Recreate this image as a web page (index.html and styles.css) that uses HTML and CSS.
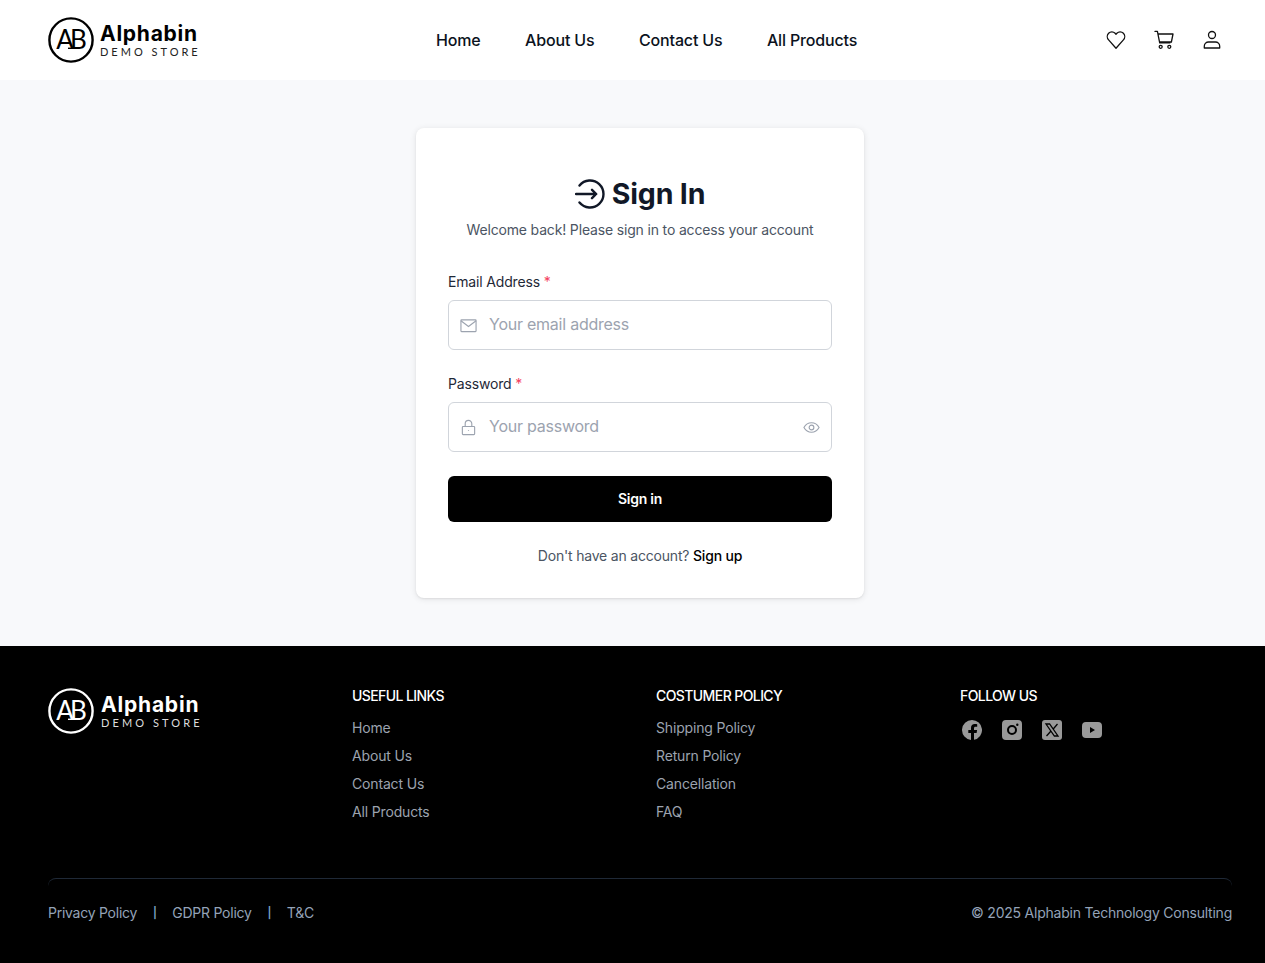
FILE: index.html
```html
<!DOCTYPE html>
<html lang="en">
<head>
<meta charset="utf-8">
<title>Sign In</title>
<link rel="stylesheet" href="styles.css">
</head>
<body>
<div class="page">
<header class="site-header">
  <a class="logo">
    <svg class="logo-mark" viewBox="0 0 46 46"><circle cx="23" cy="23" r="21.6" fill="none" stroke="currentColor" stroke-width="2.400"/><text x="21.500" y="32" text-anchor="middle" class="logo-ab">AB</text><path d="M20 31.300h11" class="logo-base"/></svg>
    <span class="logo-text"><span class="logo-name">Alphabin</span><span class="logo-sub">DEMO STORE</span></span>
  </a>
  <nav class="main-nav">
    <a>Home</a><a>About Us</a><a>Contact Us</a><a>All Products</a>
  </nav>
  <div class="header-icons">
    <svg class="hicon" viewBox="0 0 24 24"><path d="M12 20.200 4.600 11.900a4.900 4.900 0 0 1 0-6.700 4.500 4.500 0 0 1 6.500 0l.9 1.100.9-1.100a4.500 4.500 0 0 1 6.500 0 4.900 4.900 0 0 1 0 6.700z"/></svg>
    <svg class="hicon" viewBox="0 0 24 24"><path d="M3 3.400h2.400l2.300 11.500h10.100M6 6h15l-1.600 8H7.600"/><circle cx="8.700" cy="18.800" r="1.500"/><circle cx="17.300" cy="18.800" r="1.500"/></svg>
    <svg class="hicon" viewBox="0 0 24 24"><circle cx="12" cy="7" r="3.500"/><path d="M4.300 20v-1.800c0-2.400 2-4.200 4.200-4.200h7c2.200 0 4.200 1.800 4.200 4.200V20z"/></svg>
  </div>
</header>

<main class="main">
  <section class="card">
    <div class="card-head">
      <h1 class="title"><svg class="title-icon" viewBox="0 0 30 30"><path d="M4.500 6.500a13.500 13.500 0 1 1 0 17M1 15h20M17 10.800 21.200 15 17 19.200"/></svg>Sign In</h1>
      <p class="subtitle">Welcome back! Please sign in to access your account</p>
    </div>
    <form class="form">
      <div class="field">
        <label class="label">Email Address <span class="req">*</span></label>
        <div class="input">
          <svg class="ficon" viewBox="0 0 18 18"><rect x="1" y="3" width="16" height="12.500" rx=".6"/><path d="m1 4 8 6 8-6"/></svg>
          <span class="placeholder">Your email address</span>
        </div>
      </div>
      <div class="field">
        <label class="label">Password <span class="req">*</span></label>
        <div class="input">
          <svg class="ficon" viewBox="0 0 18 18"><rect x="2.500" y="8" width="13" height="8.500" rx=".8"/><path d="M5.500 8V5a3.500 3.500 0 0 1 7 0v3M9 12v.8"/></svg>
          <span class="placeholder">Your password</span>
          <svg class="ficon eye" viewBox="0 0 18 18"><path d="M1 9C3 5.500 5.800 4 9 4s6 1.500 8 5c-2 3.500-4.800 5-8 5s-6-1.500-8-5z"/><circle cx="9" cy="9" r="2.500"/></svg>
        </div>
      </div>
      <button type="button" class="submit">Sign in</button>
    </form>
    <p class="alt">Don't have an account? <a class="alt-link">Sign up</a></p>
  </section>
</main>

<footer class="site-footer">
  <div class="footer-grid">
    <a class="logo logo-light">
      <svg class="logo-mark" viewBox="0 0 46 46"><circle cx="23" cy="23" r="21.6" fill="none" stroke="currentColor" stroke-width="2.400"/><text x="21.500" y="32" text-anchor="middle" class="logo-ab">AB</text><path d="M20 31.300h11" class="logo-base"/></svg>
      <span class="logo-text"><span class="logo-name">Alphabin</span><span class="logo-sub">DEMO STORE</span></span>
    </a>
    <div class="fcol">
      <h2 class="fhead">USEFUL LINKS</h2>
      <a>Home</a><a>About Us</a><a>Contact Us</a><a>All Products</a>
    </div>
    <div class="fcol">
      <h2 class="fhead">COSTUMER POLICY</h2>
      <a>Shipping Policy</a><a>Return Policy</a><a>Cancellation</a><a>FAQ</a>
    </div>
    <div class="fcol">
      <h2 class="fhead">FOLLOW US</h2>
      <div class="socials">
        <svg class="social" viewBox="0 0 20 20"><path fill-rule="evenodd" d="M10 0a10 10 0 0 1 2 19.800V13h2.600l.5-3H12V8.300c0-.9.400-1.500 1.600-1.500h1.600V4.200c-.6-.1-1.500-.2-2.400-.2C10.400 4 9 5.400 9 7.900V10H6.300v3H9v6.950A10 10 0 0 1 10 0z"/></svg>
        <svg class="social" viewBox="0 0 20 20"><path fill-rule="evenodd" d="M4 0h12a4 4 0 0 1 4 4v12a4 4 0 0 1-4 4H4a4 4 0 0 1-4-4V4a4 4 0 0 1 4-4zm6 5a5 5 0 1 0 0 10 5 5 0 0 0 0-10zm0 2a3 3 0 1 1 0 6 3 3 0 0 1 0-6zm5.300-3.500a1.200 1.200 0 1 0 0 2.400 1.200 1.200 0 0 0 0-2.400z"/></svg>
        <svg class="social" viewBox="0 0 20 20"><rect width="20" height="20" rx="3"/><path d="M4 4h3.600L16 16h-3.600zM15.500 4 11 9.200M9 11l-4.500 5" fill="none" stroke="#000" stroke-width="1.300"/></svg>
        <svg class="social" viewBox="0 0 20 20"><path fill-rule="evenodd" d="M4 2h12a4 4 0 0 1 4 4v8a4 4 0 0 1-4 4H4a4 4 0 0 1-4-4V6a4 4 0 0 1 4-4zm4 5v6l5-3z"/></svg>
      </div>
    </div>
  </div>
  <div class="footer-bottom">
    <div class="legal"><a>Privacy Policy</a><span class="sep">|</span><a>GDPR Policy</a><span class="sep">|</span><a>T&amp;C</a></div>
    <div class="copy">© 2025 Alphabin Technology Consulting</div>
  </div>
</footer>
</div>
</body>
</html>
```
FILE: styles.css
```css
* { box-sizing: border-box; }
html, body { margin: 0; padding: 0; overflow: hidden; }
body { font-family: Inter, "Liberation Sans", sans-serif; background: #f8f9fb; letter-spacing: -0.01em; }
.page { width: 1280px; height: 963px; display: flex; flex-direction: column; }

.site-header { height: 80px; background: #fff; padding: 0 48px; display: flex; align-items: center; flex: none; }
.logo { display: flex; align-items: center; gap: 6px; color: #000; width: 304px; letter-spacing: 0; }
.logo-mark { width: 46px; height: 46px; flex: none; }
.logo-ab { font: 400 26px Lato, sans-serif; fill: currentColor; letter-spacing: -4px; }
.logo-base { fill: none; stroke: currentColor; stroke-width: 1.400; }
.logo-text { display: flex; flex-direction: column; line-height: 1; }
.logo-name { font: 700 21px/23px Inter, sans-serif; letter-spacing: 0.75px; }
.logo-sub { font: 400 11px/13px Lato, sans-serif; letter-spacing: 3px; color: #222; }
.main-nav { display: flex; gap: 44.500px; font-size: 16px; font-weight: 450; letter-spacing: -0.01em; color: #0b1220; margin-left: 84px; }
.header-icons { margin-left: auto; display: flex; gap: 24px; padding-right: 8px; }
.hicon { width: 24px; height: 24px; fill: none; stroke: #111; stroke-width: 1.300; stroke-linejoin: round; stroke-linecap: round; display: block; }

.main { flex: 1; padding: 48px 0; display: flex; justify-content: center; align-items: flex-start; }
.card { width: 448px; height: 470px; background: #fff; border-radius: 8px; box-shadow: 0 1px 6px rgba(0,0,0,.1), 0 1px 2px rgba(0,0,0,.06); padding: 46px 32px 32px; }
.card-head { text-align: center; margin-bottom: 32px; }
.title { margin: 0 0 6px; display: flex; justify-content: center; align-items: center; gap: 7px; font-size: 28.500px; line-height: 40px; font-weight: 700; color: #111827; }
.title-icon { width: 30px; height: 30px; fill: none; stroke: #111827; stroke-width: 2.400; stroke-linecap: round; stroke-linejoin: round; }
.subtitle { margin: 0; font-size: 14px; line-height: 20px; color: #4b5563; }

.field { margin-bottom: 24px; }
.label { display: block; font-size: 14px; line-height: 20px; font-weight: 400; color: #1f2937; margin-bottom: 8px; }
.req { color: #f43f5e; }
.input { height: 50px; border: 1px solid #d1d5db; border-radius: 6px; display: flex; align-items: center; padding: 0 11px; gap: 12px; background: #fff; }
.ficon { width: 17px; height: 17px; fill: none; stroke: #9ca3af; stroke-width: 1.200; flex: none; }
.placeholder { font-size: 16px; line-height: 20px; color: #9ca3af; flex: 1; padding-bottom: 2px; letter-spacing: -0.015em; }
.submit { width: 100%; height: 46px; background: #000; color: #fff; border: 0; border-radius: 6px; font: inherit; font-size: 14px; font-weight: 600; display: block; letter-spacing: -0.02em; padding-bottom: 3px; }
.alt { margin: 24px 0 0; text-align: center; font-size: 14px; line-height: 20px; color: #4b5563; letter-spacing: -0.014em; }
.alt-link { color: #000; font-weight: 500; }

.site-footer { height: 317px; background: #000; padding: 40px 48px 0; flex: none; color: #9ca3af; font-size: 14px; }
.footer-grid { display: grid; grid-template-columns: repeat(4, 272px); gap: 32px; height: 192px; }
.logo-light { color: #fff; width: auto; align-self: start; height: 50px; gap: 7px; }
.logo-light .logo-name { letter-spacing: 0.8px; }
.logo-light .logo-sub { color: #ddd; letter-spacing: 3.100px; }
.fcol { display: flex; flex-direction: column; gap: 8px; line-height: 20px; }
.fhead { margin: 0 0 4px; font-size: 14px; line-height: 20px; font-weight: 500; color: #fff; letter-spacing: -0.042em; }
.socials { display: flex; gap: 20px; padding: 2px 2px; }
.social { width: 20px; height: 20px; fill: #999; }
.footer-bottom { border-top: 1px solid #1f2937; border-radius: 8px 8px 0 0; display: flex; justify-content: space-between; align-items: center; padding-top: 24px; line-height: 20px; color: #94a3b8; }
.legal { display: flex; gap: 15.750px; align-items: center; letter-spacing: -0.018em; }
.sep { color: #7ea3c7; font-size: 11px; font-weight: 600; }
.copy { letter-spacing: -0.016em; }
```
